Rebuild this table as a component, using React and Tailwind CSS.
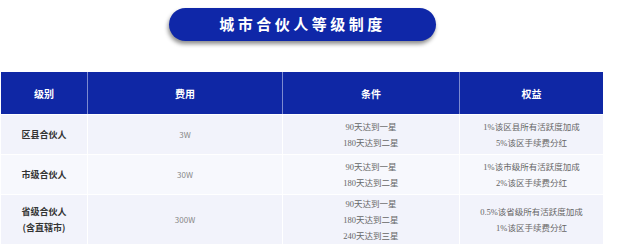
import React from "react";

const rows = [
  { level: ["区县合伙人"], fee: "3W", cond: ["90天达到一星", "180天达到二星"], rights: ["1%该区县所有活跃度加成", "5%该区手续费分红"], h: "h-[40px]", bg: "bg-[#f2f3fb]" },
  { level: ["市级合伙人"], fee: "30W", cond: ["90天达到一星", "180天达到二星"], rights: ["1%该市级所有活跃度加成", "2%该区手续费分红"], h: "h-[40px]", bg: "bg-[#f7f8fd]" },
  { level: ["省级合伙人", "(含直辖市)"], fee: "300W", cond: ["90天达到一星", "180天达到二星", "240天达到三星"], rights: ["0.5%该省级所有活跃度加成", "1%该区手续费分红"], h: "h-[50px]", bg: "bg-[#f2f3fb]" },
];

const sans = "font-['Noto_Sans_CJK_SC',sans-serif]";
const serif = "font-['Liberation_Serif','Noto_Sans_CJK_SC',serif]";

export default function App() {
  return (
    <div className="w-[639px] h-[246px] bg-white relative overflow-hidden">
      <div className="flex justify-center pt-[8px] pl-[28px] pr-[62px]">
        <div className={`w-[267px] h-[33px] rounded-full bg-[#0f27a8] shadow-[-1px_3px_4px_rgba(0,0,0,0.45)] flex items-center justify-center text-white font-bold text-[15px] tracking-[3.5px] ${sans}`}>
          城市合伙人等级制度
        </div>
      </div>
      <div className="mt-[31px] ml-[1px] w-[602px] flex flex-col">
        <div className={`flex h-[42px] bg-[#0f27a5] text-white text-[10px] font-bold ${sans}`}>
          <div className="w-[87px] flex items-center justify-center border-r border-[#7d8ad0]">级别</div>
          <div className="w-[195px] flex items-center justify-center border-r border-[#7d8ad0]">费用</div>
          <div className="w-[177px] flex items-center justify-center border-r border-[#7d8ad0]">条件</div>
          <div className="flex-1 flex items-center justify-center">权益</div>
        </div>
        {rows.map((r, i) => (
          <div key={i} className={`flex ${r.h} ${r.bg} border-t border-white`}>
            <div className={`w-[87px] flex flex-col items-center justify-center border-r border-white text-[9px] font-bold text-[#333] leading-[16px] ${sans}`}>
              {r.level.map((t) => <div key={t}>{t}</div>)}
            </div>
            <div className={`w-[195px] flex items-center justify-center border-r border-white text-[8px] text-[#888] ${sans}`}>{r.fee}</div>
            <div className={`w-[177px] flex flex-col items-center justify-center border-r border-white text-[8.5px] text-[#666] leading-[16px] ${serif}`}>
              {r.cond.map((t) => <div key={t}>{t}</div>)}
            </div>
            <div className={`flex-1 flex flex-col items-center justify-center text-[8.5px] text-[#666] leading-[16px] ${serif}`}>
              {r.rights.map((t) => <div key={t}>{t}</div>)}
            </div>
          </div>
        ))}
      </div>
    </div>
  );
}
